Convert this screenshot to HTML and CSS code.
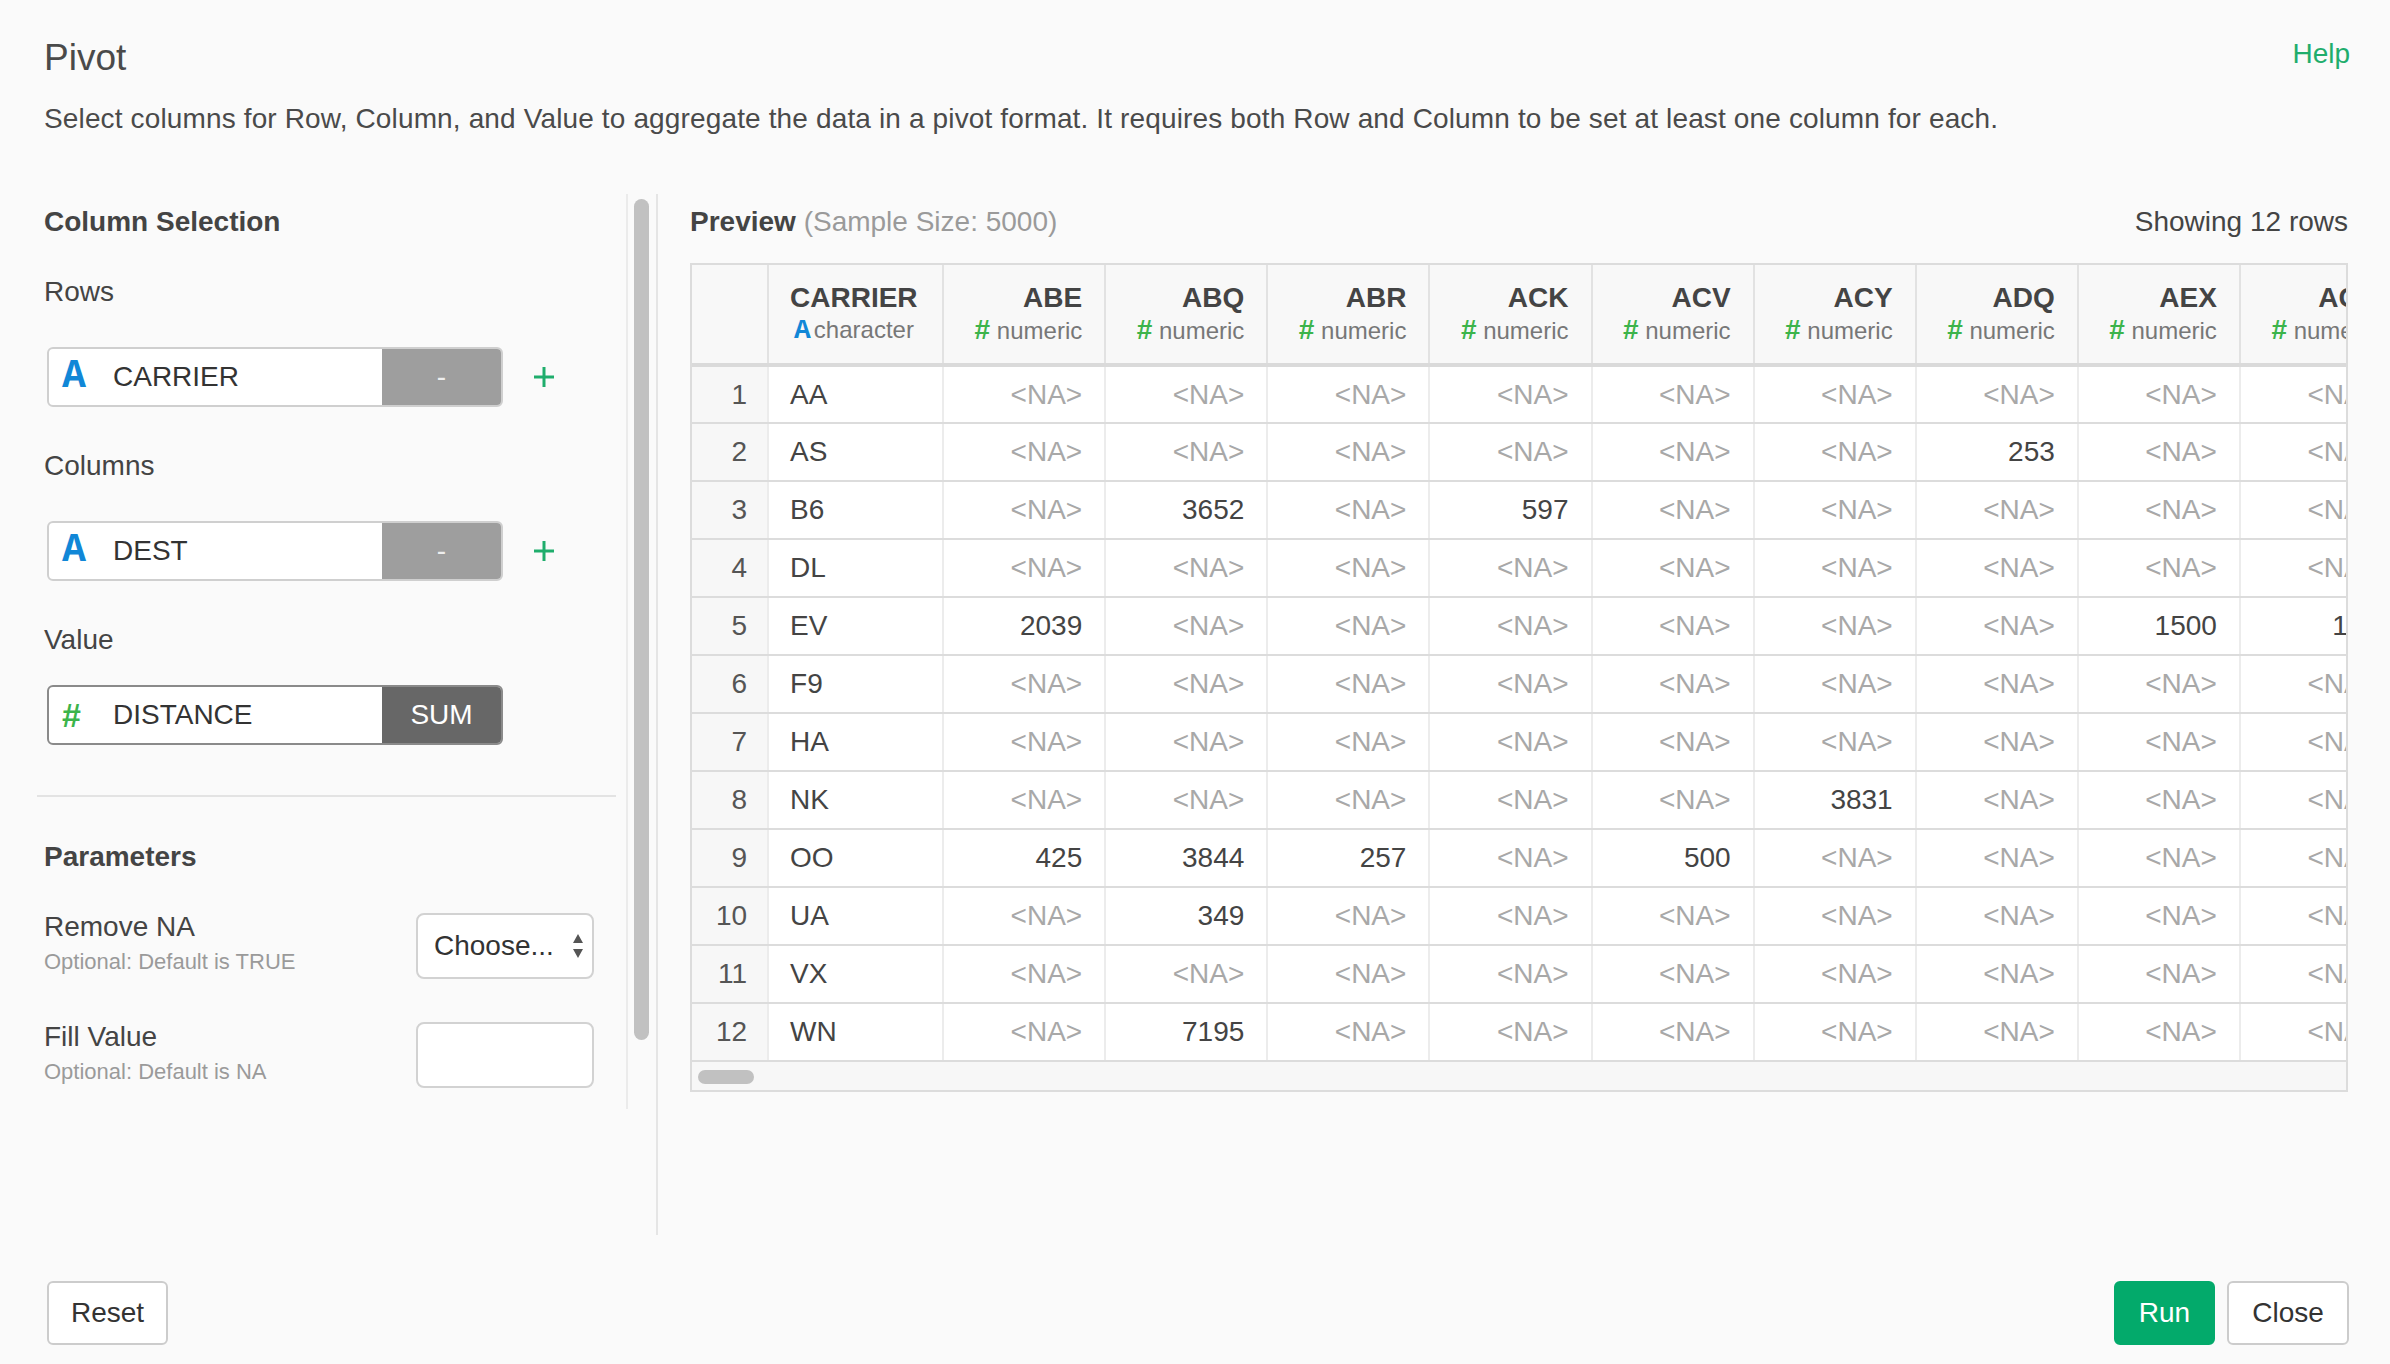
FILE: index.html
```html
<!DOCTYPE html>
<html>
<head>
<meta charset="utf-8">
<link rel="stylesheet" href="styles.css">
</head>
<body>
<div class="page">
  <header class="top">
    <h1 class="title">Pivot</h1>
    <a class="help">Help</a>
  </header>
  <p class="desc">Select columns for Row, Column, and Value to aggregate the data in a pivot format. It requires both Row and Column to be set at least one column for each.</p>

  <main class="main">
    <section class="left">
      <div class="left-content">
        <h2 class="sec-title">Column Selection</h2>
        <div class="label first">Rows</div>
        <div class="pick-row">
          <div class="pill">
            <span class="ico-a">A</span><span class="pill-text">CARRIER</span>
            <span class="pill-btn">-</span>
          </div>
          <svg class="plus" viewBox="0 0 24 24" width="24" height="24"><path d="M12 2v20M2 12h20" stroke="#1fad6c" stroke-width="3"/></svg>
        </div>
        <div class="label">Columns</div>
        <div class="pick-row">
          <div class="pill">
            <span class="ico-a">A</span><span class="pill-text">DEST</span>
            <span class="pill-btn">-</span>
          </div>
          <svg class="plus" viewBox="0 0 24 24" width="24" height="24"><path d="M12 2v20M2 12h20" stroke="#1fad6c" stroke-width="3"/></svg>
        </div>
        <div class="label value-label">Value</div>
        <div class="pick-row">
          <div class="pill pill-dark">
            <span class="ico-hash">#</span><span class="pill-text">DISTANCE</span>
            <span class="pill-btn dark">SUM</span>
          </div>
        </div>
        <hr class="sep">
        <h2 class="sec-title params">Parameters</h2>
        <div class="param">
          <div class="param-text">
            <div class="param-name">Remove NA</div>
            <div class="param-hint">Optional: Default is TRUE</div>
          </div>
          <div class="select">
            <span>Choose...</span>
            <svg class="updown" viewBox="0 0 12 26" width="12" height="26"><path d="M6 1 L11 10 H1 Z M6 25 L11 16 H1 Z" fill="#555"/></svg>
          </div>
        </div>
        <div class="param second">
          <div class="param-text">
            <div class="param-name">Fill Value</div>
            <div class="param-hint">Optional: Default is NA</div>
          </div>
          <div class="textbox"></div>
        </div>
      </div>
      <div class="vscroll"><div class="vthumb"></div></div>
    </section>
    <div class="divider"></div>
    <section class="right">
      <div class="prev-head">
        <div><b class="prev-title">Preview</b> <span class="sample">(Sample Size: 5000)</span></div>
        <div class="showing">Showing 12 rows</div>
      </div>
      <div class="table-wrap">
        <table class="grid">
          <colgroup>
            <col class="c-idx"><col class="c-car"><col class="c-num"><col class="c-num"><col class="c-num"><col class="c-num"><col class="c-num"><col class="c-num"><col class="c-num"><col class="c-num"><col class="c-num">
          </colgroup>
          <thead>
            <tr>
              <th class="idx"></th>
              <th class="txt"><div class="cname">CARRIER</div><div class="ctype"><span class="t-a">A</span>character</div></th>
              <th><div class="cname">ABE</div><div class="ctype"><span class="t-h">#</span> numeric</div></th>
              <th><div class="cname">ABQ</div><div class="ctype"><span class="t-h">#</span> numeric</div></th>
              <th><div class="cname">ABR</div><div class="ctype"><span class="t-h">#</span> numeric</div></th>
              <th><div class="cname">ACK</div><div class="ctype"><span class="t-h">#</span> numeric</div></th>
              <th><div class="cname">ACV</div><div class="ctype"><span class="t-h">#</span> numeric</div></th>
              <th><div class="cname">ACY</div><div class="ctype"><span class="t-h">#</span> numeric</div></th>
              <th><div class="cname">ADQ</div><div class="ctype"><span class="t-h">#</span> numeric</div></th>
              <th><div class="cname">AEX</div><div class="ctype"><span class="t-h">#</span> numeric</div></th>
              <th><div class="cname">AGS</div><div class="ctype"><span class="t-h">#</span> numeric</div></th>
            </tr>
          </thead>
          <tbody>
            <tr><td class="idx">1</td><td class="txt">AA</td><td class="na">&lt;NA&gt;</td><td class="na">&lt;NA&gt;</td><td class="na">&lt;NA&gt;</td><td class="na">&lt;NA&gt;</td><td class="na">&lt;NA&gt;</td><td class="na">&lt;NA&gt;</td><td class="na">&lt;NA&gt;</td><td class="na">&lt;NA&gt;</td><td class="na">&lt;NA&gt;</td></tr>
            <tr><td class="idx">2</td><td class="txt">AS</td><td class="na">&lt;NA&gt;</td><td class="na">&lt;NA&gt;</td><td class="na">&lt;NA&gt;</td><td class="na">&lt;NA&gt;</td><td class="na">&lt;NA&gt;</td><td class="na">&lt;NA&gt;</td><td>253</td><td class="na">&lt;NA&gt;</td><td class="na">&lt;NA&gt;</td></tr>
            <tr><td class="idx">3</td><td class="txt">B6</td><td class="na">&lt;NA&gt;</td><td>3652</td><td class="na">&lt;NA&gt;</td><td>597</td><td class="na">&lt;NA&gt;</td><td class="na">&lt;NA&gt;</td><td class="na">&lt;NA&gt;</td><td class="na">&lt;NA&gt;</td><td class="na">&lt;NA&gt;</td></tr>
            <tr><td class="idx">4</td><td class="txt">DL</td><td class="na">&lt;NA&gt;</td><td class="na">&lt;NA&gt;</td><td class="na">&lt;NA&gt;</td><td class="na">&lt;NA&gt;</td><td class="na">&lt;NA&gt;</td><td class="na">&lt;NA&gt;</td><td class="na">&lt;NA&gt;</td><td class="na">&lt;NA&gt;</td><td class="na">&lt;NA&gt;</td></tr>
            <tr><td class="idx">5</td><td class="txt">EV</td><td>2039</td><td class="na">&lt;NA&gt;</td><td class="na">&lt;NA&gt;</td><td class="na">&lt;NA&gt;</td><td class="na">&lt;NA&gt;</td><td class="na">&lt;NA&gt;</td><td class="na">&lt;NA&gt;</td><td>1500</td><td>143</td></tr>
            <tr><td class="idx">6</td><td class="txt">F9</td><td class="na">&lt;NA&gt;</td><td class="na">&lt;NA&gt;</td><td class="na">&lt;NA&gt;</td><td class="na">&lt;NA&gt;</td><td class="na">&lt;NA&gt;</td><td class="na">&lt;NA&gt;</td><td class="na">&lt;NA&gt;</td><td class="na">&lt;NA&gt;</td><td class="na">&lt;NA&gt;</td></tr>
            <tr><td class="idx">7</td><td class="txt">HA</td><td class="na">&lt;NA&gt;</td><td class="na">&lt;NA&gt;</td><td class="na">&lt;NA&gt;</td><td class="na">&lt;NA&gt;</td><td class="na">&lt;NA&gt;</td><td class="na">&lt;NA&gt;</td><td class="na">&lt;NA&gt;</td><td class="na">&lt;NA&gt;</td><td class="na">&lt;NA&gt;</td></tr>
            <tr><td class="idx">8</td><td class="txt">NK</td><td class="na">&lt;NA&gt;</td><td class="na">&lt;NA&gt;</td><td class="na">&lt;NA&gt;</td><td class="na">&lt;NA&gt;</td><td class="na">&lt;NA&gt;</td><td>3831</td><td class="na">&lt;NA&gt;</td><td class="na">&lt;NA&gt;</td><td class="na">&lt;NA&gt;</td></tr>
            <tr><td class="idx">9</td><td class="txt">OO</td><td>425</td><td>3844</td><td>257</td><td class="na">&lt;NA&gt;</td><td>500</td><td class="na">&lt;NA&gt;</td><td class="na">&lt;NA&gt;</td><td class="na">&lt;NA&gt;</td><td class="na">&lt;NA&gt;</td></tr>
            <tr><td class="idx">10</td><td class="txt">UA</td><td class="na">&lt;NA&gt;</td><td>349</td><td class="na">&lt;NA&gt;</td><td class="na">&lt;NA&gt;</td><td class="na">&lt;NA&gt;</td><td class="na">&lt;NA&gt;</td><td class="na">&lt;NA&gt;</td><td class="na">&lt;NA&gt;</td><td class="na">&lt;NA&gt;</td></tr>
            <tr><td class="idx">11</td><td class="txt">VX</td><td class="na">&lt;NA&gt;</td><td class="na">&lt;NA&gt;</td><td class="na">&lt;NA&gt;</td><td class="na">&lt;NA&gt;</td><td class="na">&lt;NA&gt;</td><td class="na">&lt;NA&gt;</td><td class="na">&lt;NA&gt;</td><td class="na">&lt;NA&gt;</td><td class="na">&lt;NA&gt;</td></tr>
            <tr><td class="idx">12</td><td class="txt">WN</td><td class="na">&lt;NA&gt;</td><td>7195</td><td class="na">&lt;NA&gt;</td><td class="na">&lt;NA&gt;</td><td class="na">&lt;NA&gt;</td><td class="na">&lt;NA&gt;</td><td class="na">&lt;NA&gt;</td><td class="na">&lt;NA&gt;</td><td class="na">&lt;NA&gt;</td></tr>
          </tbody>
        </table>
        <div class="hscroll"><div class="hthumb"></div></div>
      </div>
    </section>
  </main>

  <footer class="foot">
    <button class="btn">Reset</button>
    <div class="foot-right">
      <button class="btn run">Run</button>
      <button class="btn">Close</button>
    </div>
  </footer>
</div>
</body>
</html>
```
FILE: styles.css
```css
* { box-sizing: border-box; }
html, body { margin: 0; padding: 0; }
body {
  background: #fafafa;
  font-family: "Liberation Sans", Arial, sans-serif;
  color: #444;
  width: 2390px;
  height: 1364px;
  overflow: hidden;
}
.page { padding: 0; }

.top {
  display: flex;
  justify-content: space-between;
  align-items: flex-start;
  padding: 36px 40px 0 44px;
}
.title {
  margin: 0;
  font-size: 37px;
  line-height: 44px;
  font-weight: normal;
  color: #4a4a4a;
}
.help {
  font-size: 28px;
  line-height: 36px;
  color: #1fad6c;
}
.desc {
  margin: 21px 0 0 44px;
  font-size: 28px;
  line-height: 36px;
  letter-spacing: 0.14px;
  color: #4a4a4a;
}

.main {
  display: flex;
  align-items: flex-start;
  margin-top: 57px;
  height: 1041px;
}
.left {
  display: flex;
  height: 915px;
}
.left-content {
  width: 626px;
  padding: 8px 32px 0 44px;
}
.sec-title {
  margin: 0;
  font-size: 28px;
  line-height: 40px;
  font-weight: bold;
  color: #444;
}
.label {
  font-size: 28px;
  line-height: 40px;
  margin-top: 39px;
  color: #444;
}
.label.first { margin-top: 30px; }
.pick-row {
  display: flex;
  align-items: center;
  margin-top: 35px;
}
.value-label + .pick-row { margin-top: 25px; }
.pill {
  display: flex;
  align-items: center;
  width: 456px;
  height: 60px;
  margin-left: 3px;
  background: #fff;
  border: 2px solid #cfcfcf;
  border-radius: 6px;
  overflow: hidden;
}
.pill-dark { border-color: #8a8a8a; }
.ico-a {
  width: 64px;
  padding-left: 13px;
  font-family: "Liberation Mono", "Courier New", monospace;
  font-weight: bold;
  font-size: 40px;
  line-height: 40px;
  color: #1187d7;
}
.ico-hash {
  width: 64px;
  padding-left: 13px;
  font-family: "Liberation Sans", Arial, sans-serif;
  font-weight: bold;
  font-size: 34px;
  color: #3cb44b;
}
.pill-text {
  flex: 1;
  font-size: 28px;
  color: #333;
}
.pill-btn {
  width: 119px;
  height: 100%;
  display: flex;
  align-items: center;
  justify-content: center;
  background: #9e9e9e;
  color: #eee;
  font-size: 28px;
}
.pill-btn.dark {
  background: #676767;
  color: #fff;
}
.plus { margin-left: 29px; }

.sep {
  margin: 50px -22px 0 -7px;
  border: 0;
  border-top: 2px solid #e3e3e3;
}
.sec-title.params { margin-top: 40px; }

.param {
  display: flex;
  align-items: flex-start;
  justify-content: space-between;
  margin-top: 33px;
}
.param.second { margin-top: 40px; }
.param-name {
  font-size: 28px;
  line-height: 34px;
  color: #444;
}
.param-hint {
  font-size: 22px;
  line-height: 36px;
  color: #9a9a9a;
}
.select, .textbox {
  width: 178px;
  height: 66px;
  margin-top: 3px;
  background: #fff;
  border: 2px solid #d2d2d2;
  border-radius: 8px;
}
.select {
  display: flex;
  align-items: center;
  justify-content: space-between;
  padding: 0 8px 0 16px;
  font-size: 28px;
  color: #333;
}
.textbox { margin-top: 2px; }

.vscroll {
  width: 30px;
  height: 100%;
  border-left: 2px solid #ebebeb;
  padding: 5px 0 0 6px;
}
.vthumb {
  width: 15px;
  height: 841px;
  background: #c1c1c1;
  border-radius: 8px;
}
.divider {
  width: 2px;
  height: 1041px;
  background: #e5e5e5;
}

.right {
  width: 1658px;
  margin-left: 32px;
  padding-top: 8px;
}
.prev-head {
  display: flex;
  justify-content: space-between;
  align-items: center;
  height: 40px;
  font-size: 28px;
}
.prev-title { color: #444; }
.sample { color: #9a9a9a; }
.showing { color: #444; }

.table-wrap {
  margin-top: 21px;
  width: 1658px;
  overflow: hidden;
  border: 2px solid #dcdcdc;
  background: #fff;
}
.grid {
  border-collapse: collapse;
  table-layout: fixed;
  width: 1711px;
}
.c-idx { width: 76px; }
.c-car { width: 175px; }
.c-num { width: 162px; }
.grid th {
  background: #f8f8f8;
  height: 100px;
  padding: 0 22px 0 0;
  text-align: right;
  vertical-align: top;
  border-right: 2px solid #e2e2e2;
  border-bottom: 4px solid #dadada;
}
.grid th.txt { text-align: left; padding-left: 21px; }
.cname {
  margin-top: 16px;
  font-size: 28px;
  line-height: 34px;
  font-weight: bold;
  color: #444;
}
.ctype {
  font-size: 24px;
  line-height: 30px;
  font-weight: normal;
  color: #777;
  white-space: nowrap;
}
.t-h { color: #3cb44b; font-weight: bold; font-size: 28px; }
.t-a {
  font-family: "Liberation Mono", "Courier New", monospace;
  font-weight: bold;
  font-size: 28px;
  color: #1187d7;
  margin: 0 3px 0 4px;
}
.grid td {
  height: 58px;
  padding: 0 22px 0 0;
  text-align: right;
  font-size: 28px;
  color: #444;
  border-right: 2px solid #ececec;
  border-bottom: 2px solid #dcdcdc;
  white-space: nowrap;
  overflow: hidden;
}
.grid td.txt { text-align: left; padding-left: 21px; }
.grid td.idx { background: #f7f7f7; color: #555; padding-right: 20px; }
.grid td.na { color: #a8a8a8; }
.hscroll {
  height: 28px;
  background: #f7f7f7;
  padding: 8px 0 0 6px;
}
.hthumb {
  width: 56px;
  height: 14px;
  border-radius: 7px;
  background: #c1c1c1;
}

.foot {
  display: flex;
  justify-content: space-between;
  align-items: center;
  margin-top: 46px;
  padding: 0 41px 0 47px;
}
.foot-right { display: flex; gap: 12px; }
.btn {
  height: 64px;
  padding: 0 22px;
  min-width: 100px;
  font-family: "Liberation Sans", Arial, sans-serif;
  font-size: 28px;
  color: #333;
  background: #fff;
  border: 2px solid #cccccc;
  border-radius: 6px;
}
.btn:first-child { width: 121px; }
.btn.run {
  width: 101px;
  background: #03aa6b;
  border-color: #03aa6b;
  color: #fff;
}
.foot-right .btn:last-child { width: 122px; }
```
